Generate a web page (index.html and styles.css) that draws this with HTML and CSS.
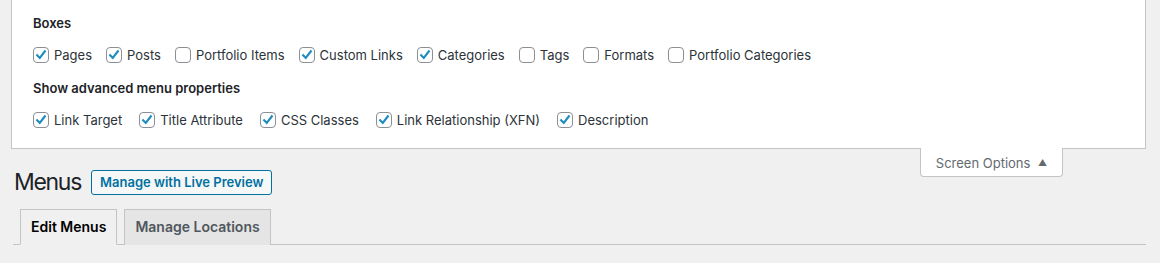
FILE: index.html
```html
<!DOCTYPE html>
<html lang="en">
<head>
    <meta charset="UTF-8">
    <title>Menus</title>
    <link rel="stylesheet" href="styles.css">
</head>
<body>
    <div class="screen-meta">
        <div class="options-panel">
            <h5 class="group-title">Boxes</h5>
            <div class="check-row">
                <label class="check"><span class="box"><svg viewBox="0 0 16 16"><path d="M3.6 8.2 L6.6 11.4 L12.4 3.8"/></svg></span>Pages</label>
                <label class="check"><span class="box"><svg viewBox="0 0 16 16"><path d="M3.6 8.2 L6.6 11.4 L12.4 3.8"/></svg></span>Posts</label>
                <label class="check"><span class="box"></span>Portfolio Items</label>
                <label class="check"><span class="box"><svg viewBox="0 0 16 16"><path d="M3.6 8.2 L6.6 11.4 L12.4 3.8"/></svg></span>Custom Links</label>
                <label class="check"><span class="box"><svg viewBox="0 0 16 16"><path d="M3.6 8.2 L6.6 11.4 L12.4 3.8"/></svg></span>Categories</label>
                <label class="check"><span class="box"></span>Tags</label>
                <label class="check"><span class="box"></span>Formats</label>
                <label class="check"><span class="box"></span>Portfolio Categories</label>
            </div>
            <h5 class="group-title">Show advanced menu properties</h5>
            <div class="check-row wide">
                <label class="check"><span class="box"><svg viewBox="0 0 16 16"><path d="M3.6 8.2 L6.6 11.4 L12.4 3.8"/></svg></span>Link Target</label>
                <label class="check"><span class="box"><svg viewBox="0 0 16 16"><path d="M3.6 8.2 L6.6 11.4 L12.4 3.8"/></svg></span>Title Attribute</label>
                <label class="check"><span class="box"><svg viewBox="0 0 16 16"><path d="M3.6 8.2 L6.6 11.4 L12.4 3.8"/></svg></span>CSS Classes</label>
                <label class="check"><span class="box"><svg viewBox="0 0 16 16"><path d="M3.6 8.2 L6.6 11.4 L12.4 3.8"/></svg></span>Link Relationship (XFN)</label>
                <label class="check"><span class="box"><svg viewBox="0 0 16 16"><path d="M3.6 8.2 L6.6 11.4 L12.4 3.8"/></svg></span>Description</label>
            </div>
        </div>
        <div class="meta-links">
            <button class="meta-toggle">Screen Options <span class="arrow">&#9650;</span></button>
        </div>
    </div>

    <div class="wrap">
        <div class="page-head">
            <h1>Menus</h1>
            <a class="outline-btn" href="#">Manage with Live Preview</a>
        </div>
        <nav class="tab-wrapper">
            <a class="tab active" href="#">Edit Menus</a>
            <a class="tab" href="#">Manage Locations</a>
        </nav>
    </div>
</body>
</html>
```

FILE: styles.css
```css
* {
    margin: 0;
    padding: 0;
    box-sizing: border-box;
}

body {
    background: #f0f0f1;
    font-family: 'Inter', 'Liberation Sans', sans-serif;
    font-size: 13px;
    color: #3c434a;
    width: 1160px;
    height: 263px;
    overflow: hidden;
}

.screen-meta {
    margin: 0 14px 0 11px;
}

.options-panel {
    background: #fff;
    border: 1px solid #c3c4c7;
    border-top: none;
    padding: 14px 21px 0;
    height: 149px;
}

.group-title {
    font-size: 13px;
    font-weight: 600;
    color: #1d2327;
    line-height: 18px;
}

.check-row {
    display: flex;
    gap: 14px;
    margin: 14px 0 15px;
}

.check-row.wide {
    gap: 17px;
}

.check {
    display: flex;
    align-items: center;
    gap: 5px;
    line-height: 18px;
    color: #2c3338;
}

.box {
    width: 16px;
    height: 16px;
    border: 1px solid #8c8f94;
    border-radius: 4px;
    background: #fff;
    display: flex;
    align-items: center;
    justify-content: center;
}

.box svg {
    width: 14px;
    height: 14px;
    fill: none;
    stroke: #1e8cbe;
    stroke-width: 2.4;
    stroke-linecap: square;
}

.meta-links {
    display: flex;
    justify-content: flex-end;
    margin-right: 83px;
    margin-top: -1px;
    height: 0;
}

.meta-toggle {
    background: #fff;
    border: 1px solid #c3c4c7;
    border-top: none;
    border-radius: 0 0 4px 4px;
    height: 29px;
    width: 143px;
    font-family: inherit;
    font-size: 13px;
    color: #646970;
    position: relative;
    z-index: 1;
    padding-top: 1px;
}

.arrow {
    font-size: 9px;
    margin-left: 4px;
    vertical-align: 2px;
}

.wrap {
    margin: 0 14px 0 13px;
}

.page-head {
    display: flex;
    align-items: center;
    gap: 10px;
    margin: 21px 0 0 1px;
}

.page-head h1 {
    font-size: 23px;
    font-weight: 400;
    letter-spacing: -1.3px;
    color: #1d2327;
    line-height: 26px;
}

.outline-btn {
    border: 1px solid #0071a1;
    border-radius: 3px;
    background: #f6f7f7;
    color: #0071a1;
    font-weight: 600;
    font-size: 13px;
    text-decoration: none;
    padding: 0 8px;
    line-height: 23px;
}

.tab-wrapper {
    display: flex;
    gap: 7px;
    margin-top: 14px;
    padding-left: 7px;
    border-bottom: 1px solid #c3c4c7;
}

.tab {
    font-size: 14px;
    font-weight: 600;
    line-height: 24px;
    padding: 5px 10px;
    border: 1px solid #c3c4c7;
    border-bottom: none;
    background: #e5e5e5;
    color: #50575e;
    text-decoration: none;
    margin-bottom: -1px;
}

.tab.active {
    background: #f0f0f1;
    color: #000;
    border-bottom: 1px solid #f0f0f1;
}
```
